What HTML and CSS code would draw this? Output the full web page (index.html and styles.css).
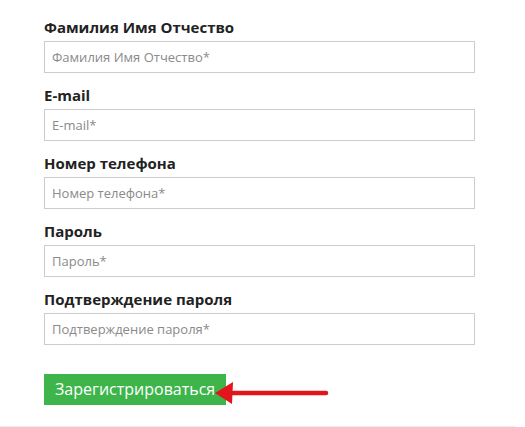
FILE: index.html
```html
<!DOCTYPE html>
<html lang="ru">
<head>
<meta charset="utf-8">
<title>Регистрация</title>
<link rel="stylesheet" href="styles.css">
</head>
<body>
<form class="form">
  <div class="field">
    <label class="label">Фамилия Имя Отчество</label>
    <input class="input" type="text" placeholder="Фамилия Имя Отчество*">
  </div>
  <div class="field">
    <label class="label">E-mail</label>
    <input class="input" type="text" placeholder="E-mail*">
  </div>
  <div class="field">
    <label class="label">Номер телефона</label>
    <input class="input" type="text" placeholder="Номер телефона*">
  </div>
  <div class="field">
    <label class="label">Пароль</label>
    <input class="input" type="password" placeholder="Пароль*">
  </div>
  <div class="field">
    <label class="label">Подтверждение пароля</label>
    <input class="input" type="password" placeholder="Подтверждение пароля*">
  </div>
  <div class="actions">
    <button class="btn" type="button">Зарегистрироваться</button>
    <svg class="arrow" width="116" height="24" viewBox="0 0 116 24">
      <path d="M16 12 H111" stroke="#e3141c" stroke-width="4.5" stroke-linecap="round" fill="none"/>
      <path d="M0 12 L18 1 L17 23 Z" fill="#e3141c"/>
    </svg>
  </div>
</form>
</body>
</html>
```

FILE: styles.css
```css
html, body {
  margin: 0;
  padding: 0;
  background: #ffffff;
}
body {
  font-family: "Open Sans", "Noto Sans", sans-serif;
  width: 525px;
  height: 427px;
  overflow: hidden;
}
.form {
  width: 515px;
  box-sizing: border-box;
  padding: 17px 0 21px 44px;
  border-bottom: 1px solid #ececec;
}
.field {
  display: flex;
  flex-direction: column;
  width: 431px;
  margin-bottom: 12px;
}
.label {
  font-size: 15px;
  font-weight: 700;
  line-height: 21px;
  color: #222222;
  margin-bottom: 3px;
}
.input {
  box-sizing: border-box;
  height: 32px;
  width: 100%;
  margin: 0;
  padding: 0 7px;
  border: 1px solid #cccccc;
  border-radius: 0;
  font-family: "Open Sans", "Noto Sans", sans-serif;
  font-size: 13px;
  color: #333;
  outline: none;
}
.input::placeholder {
  color: #8a8a8a;
  opacity: 1;
}
.actions {
  position: relative;
  margin-top: 29px;
  display: flex;
}
.btn {
  height: 31px;
  padding: 0 11px;
  border: 0;
  border-radius: 0;
  background: #3db54a;
  color: #ffffff;
  font-family: "Open Sans", "Noto Sans", sans-serif;
  font-size: 16px;
  line-height: 31px;
  cursor: pointer;
}
.arrow {
  position: absolute;
  left: 171px;
  top: 7px;
}
```
